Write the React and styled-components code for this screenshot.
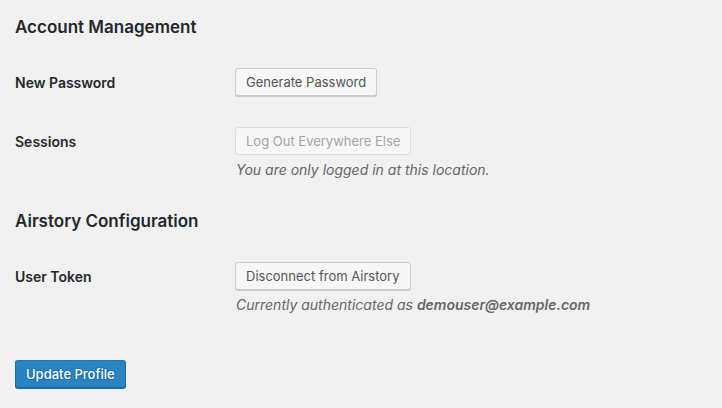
import React from 'react';
import styled, { createGlobalStyle } from 'styled-components';

const GlobalStyle = createGlobalStyle`
  html, body {
    margin: 0;
    padding: 0;
    background: #f1f1f1;
  }
  body {
    font-family: Inter, "Noto Sans", sans-serif;
    color: #23282d;
    font-size: 14px;
  }
`;

const Wrap = styled.div`
  padding: 15px 15px 20px;
  display: flex;
  flex-direction: column;
`;

const SectionTitle = styled.h2`
  margin: ${(p) => p.$gap || '0'} 0 0;
  font-size: 17px;
  line-height: 24px;
  font-weight: 600;
  color: #23282d;
`;

const FormTable = styled.div`
  display: flex;
  flex-direction: column;
  margin-top: 14px;
`;

const Row = styled.div`
  display: grid;
  grid-template-columns: 220px 1fr;
  padding: 15px 0 16px;
`;

const Label = styled.div`
  padding-top: 6px;
  font-size: 14px;
  line-height: 18px;
  font-weight: 600;
  color: #23282d;
`;

const Field = styled.div`
  display: flex;
  flex-direction: column;
  align-items: flex-start;
`;

const Button = styled.button`
  height: 28px;
  box-sizing: border-box;
  padding: 0 10px 1px;
  font-family: inherit;
  font-size: 13px;
  line-height: 26px;
  border-radius: 3px;
  border: 1px solid #ccc;
  background: #f7f7f7;
  color: #555;
  box-shadow: 0 1px 0 #ccc;
  cursor: pointer;

  &:disabled {
    color: #a0a5aa;
    border-color: #ddd;
    background: #f7f7f7;
    box-shadow: none;
    cursor: default;
  }
`;

const PrimaryButton = styled(Button)`
  background: #2a83c2;
  border-color: #2177b3 #1c6ca4 #1c6ca4;
  box-shadow: 0 1px 0 #1c6ca4;
  color: #fff;
  font-weight: 500;
  text-shadow: 0 -1px 1px #1f70a8, 1px 0 1px #1f70a8, 0 1px 1px #1f70a8, -1px 0 1px #1f70a8;
`;

const Description = styled.p`
  margin: 4px 0 0 1px;
  font-size: 14px;
  line-height: 22px;
  font-style: italic;
  color: #666;

  strong {
    font-weight: 600;
  }
`;

const Submit = styled.div`
  margin-top: 28px;
`;

export default function App() {
  return (
    <>
      <GlobalStyle />
      <Wrap>
        <SectionTitle>Account Management</SectionTitle>
        <FormTable>
          <Row>
            <Label>New Password</Label>
            <Field>
              <Button type="button">Generate Password</Button>
            </Field>
          </Row>
          <Row>
            <Label>Sessions</Label>
            <Field>
              <Button type="button" disabled>Log Out Everywhere Else</Button>
              <Description>You are only logged in at this location.</Description>
            </Field>
          </Row>
        </FormTable>

        <SectionTitle $gap="12px">Airstory Configuration</SectionTitle>
        <FormTable>
          <Row>
            <Label>User Token</Label>
            <Field>
              <Button type="button">Disconnect from Airstory</Button>
              <Description>
                Currently authenticated as <strong>demouser@example.com</strong>
              </Description>
            </Field>
          </Row>
        </FormTable>

        <Submit>
          <PrimaryButton type="submit">Update Profile</PrimaryButton>
        </Submit>
      </Wrap>
    </>
  );
}
